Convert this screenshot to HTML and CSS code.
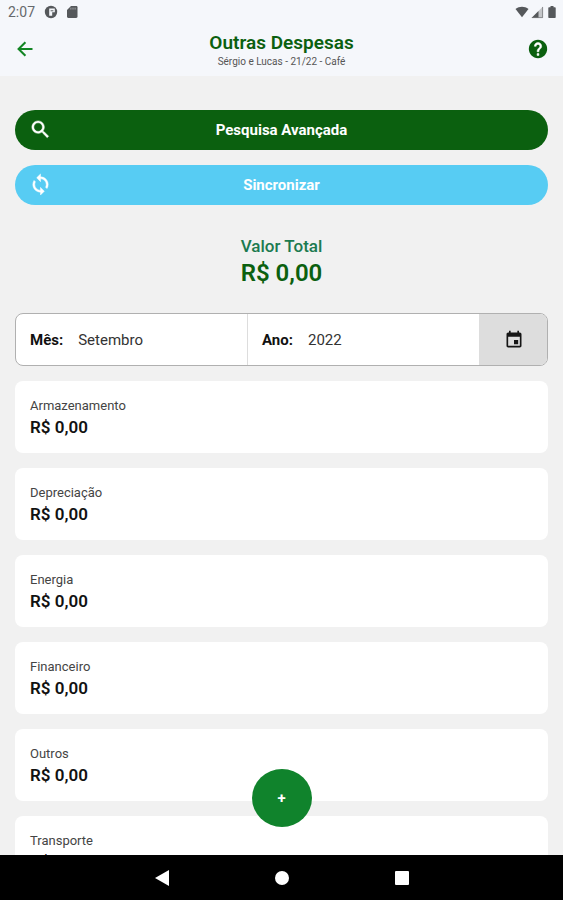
FILE: index.html
```html
<!DOCTYPE html>
<html lang="pt-BR">
<head>
<meta charset="utf-8">
<meta name="viewport" content="width=device-width, initial-scale=1">
<title>Outras Despesas</title>
<link rel="stylesheet" href="styles.css">
</head>
<body>
<div class="screen">
  <header class="header">
    <div class="status">
      <span class="clock">2:07</span>
      <svg class="status-icon" viewBox="0 0 14 14"><circle cx="7" cy="7" r="6.200" fill="#55585b"/><path fill="#f5f7fb" d="M5.200 3.600h5.600v3.600H8.200v3.600H5.200z"/><path fill="#85888b" d="M6.600 5h2.800v1.400H6.600z"/></svg>
      <svg class="status-icon sd" viewBox="0 0 14 14"><path fill="#55585b" d="M6 1h5.2c.7 0 1.3.5 1.3 1.200v9.600c0 .7-.6 1.200-1.300 1.200H3.300c-.7 0-1.300-.5-1.300-1.200V5z"/><path stroke="#a9abae" stroke-width=".9" d="M5.900 2.600v2M8 2.600v2M10.100 2.600v2"/></svg>
      <span class="spacer"></span>
      <svg class="status-icon" viewBox="0 0 14 14"><path fill="#55585b" d="M.5 4C4.300.900 9.700.900 13.500 4L7 12.200z"/></svg>
      <svg class="status-icon" viewBox="0 0 14 14"><path fill="#c4c6c9" d="M13 1.500V13H1.500z"/><path fill="#55585b" d="M8.500 6v7h-7z"/><path fill="none" stroke="#77797c" stroke-width=".8" d="M12.600 2v10.600H2"/></svg>
      <svg class="status-icon" viewBox="0 0 14 14"><path fill="#55585b" d="M5.500 1h3v1.200H10c.4 0 .7.3.7.7v9.400c0 .4-.3.700-.7.700H4c-.4 0-.7-.3-.7-.7V2.900c0-.4.3-.7.7-.7h1.500z"/></svg>
    </div>
    <div class="appbar">
      <button class="icon-button" type="button" aria-label="Voltar">
        <svg class="back-icon" viewBox="0 0 24 24"><path fill="none" stroke="#138524" stroke-width="2.500" d="M21 12H4.500M12.500 3.800 4.300 12l8.200 8.200"/></svg>
      </button>
      <div class="titles">
        <h1 class="title">Outras Despesas</h1>
        <p class="subtitle">Sérgio e Lucas - 21/22 - Café</p>
      </div>
      <button class="icon-button" type="button" aria-label="Ajuda">
        <svg class="help-icon" viewBox="0 0 24 24"><path fill="#0b600f" stroke="none" d="M12 2C6.480 2 2 6.480 2 12s4.480 10 10 10 10-4.480 10-10S17.520 2 12 2z"/><path fill="#fff" stroke="#fff" stroke-width=".6" d="M13 19h-2v-2h2v2zm2.070-7.750-.9.920C13.450 12.900 13 13.500 13 15h-2v-.5c0-1.100.450-2.100 1.170-2.830l1.240-1.260c.370-.360.590-.860.590-1.410 0-1.100-.9-2-2-2s-2 .9-2 2H8c0-2.210 1.790-4 4-4s4 1.790 4 4c0 .880-.360 1.680-.930 2.250z"/></svg>
      </button>
    </div>
  </header>

  <main class="content">
    <div class="actions">
      <button class="action search" type="button">
        <svg class="action-icon" viewBox="0 0 24 24"><path fill="currentColor" stroke="currentColor" stroke-width=".5" d="M15.500 14h-.79l-.28-.27C15.410 12.590 16 11.110 16 9.500 16 5.910 13.090 3 9.500 3S3 5.910 3 9.500 5.910 16 9.500 16c1.610 0 3.090-.59 4.230-1.570l.27.28v.79l5 4.990L20.490 19l-4.990-5zm-6 0C7.010 14 5 11.990 5 9.500S7.010 5 9.500 5 14 7.010 14 9.500 11.990 14 9.500 14z"/></svg>
        <span>Pesquisa Avançada</span>
      </button>
      <button class="action sync" type="button">
        <svg class="action-icon" viewBox="0 0 24 24"><path fill="currentColor" stroke="currentColor" stroke-width=".5" d="M12 4V1L8 5l4 4V6c3.310 0 6 2.690 6 6 0 1.010-.25 1.970-.7 2.800l1.460 1.460C19.540 15.030 20 13.570 20 12c0-4.420-3.580-8-8-8zm0 14c-3.310 0-6-2.690-6-6 0-1.010.25-1.970.7-2.800L5.240 7.740C4.460 8.970 4 10.430 4 12c0 4.420 3.580 8 8 8v3l4-4-4-4v3z"/></svg>
        <span>Sincronizar</span>
      </button>
    </div>

    <section class="total">
      <h2 class="total-label">Valor Total</h2>
      <p class="total-value">R$ 0,00</p>
    </section>

    <div class="period">
      <div class="period-field"><span class="period-name">Mês:</span><span class="period-value">Setembro</span></div>
      <div class="period-field"><span class="period-name">Ano:</span><span class="period-value">2022</span></div>
      <button class="calendar" type="button" aria-label="Escolher período">
        <svg class="calendar-icon" viewBox="0 0 24 24"><path fill="#151515" d="M17 12h-5v5h5v-5zM16 1v2H8V1H6v2H5c-1.110 0-1.990.9-1.990 2L3 19c0 1.100.890 2 2 2h14c1.100 0 2-.9 2-2V5c0-1.100-.9-2-2-2h-1V1h-2zm3 18H5V8h14v11z"/></svg>
      </button>
    </div>

    <ul class="expenses">
      <li class="card"><span class="card-name">Armazenamento</span><strong class="card-value">R$ 0,00</strong></li>
      <li class="card"><span class="card-name">Depreciação</span><strong class="card-value">R$ 0,00</strong></li>
      <li class="card"><span class="card-name">Energia</span><strong class="card-value">R$ 0,00</strong></li>
      <li class="card"><span class="card-name">Financeiro</span><strong class="card-value">R$ 0,00</strong></li>
      <li class="card"><span class="card-name">Outros</span><strong class="card-value">R$ 0,00</strong></li>
      <li class="card"><span class="card-name">Transporte</span><strong class="card-value">R$ 0,00</strong></li>
    </ul>
  </main>

  <footer class="footer">
    <button class="add" type="button" aria-label="Adicionar despesa">+</button>
    <nav class="navbar" aria-label="Sistema">
      <button class="nav-button" type="button" aria-label="Voltar"><svg class="nav-icon" viewBox="0 0 16 16"><path fill="#fff" d="M15 0v16L1 8z"/></svg></button>
      <button class="nav-button" type="button" aria-label="Início"><svg class="nav-icon" viewBox="0 0 16 16"><circle cx="8" cy="8" r="7" fill="#fff"/></svg></button>
      <button class="nav-button" type="button" aria-label="Recentes"><svg class="nav-icon" viewBox="0 0 16 16"><rect x="1" y="1" width="14" height="14" rx="1" fill="#fff"/></svg></button>
    </nav>
  </footer>
</div>
</body>
</html>
```
FILE: styles.css
```css
* {
  box-sizing: border-box;
}

body {
  margin: 0;
  background: #f1f1f1;
  color: #111;
  font-family: Roboto, "Liberation Sans", sans-serif;
  font-size: 15px;
}

h1, h2, p, ul {
  margin: 0;
  padding: 0;
}

button {
  border: 0;
  padding: 0;
  font: inherit;
  cursor: pointer;
}

svg {
  display: block;
}

.screen {
  display: flex;
  flex-direction: column;
  height: 100vh;
}

.header {
  background: #f5f7fb;
  padding-bottom: 2px;
}

.status {
  display: flex;
  align-items: center;
  gap: 1px;
  height: 24px;
  padding: 0 4px 0 8px;
  color: #66696c;
}

.clock {
  margin-right: 8px;
  font-size: 14px;
}

.status-icon {
  width: 14px;
  height: 14px;
}

.sd {
  margin-left: 6px;
}

.spacer {
  flex: 1;
}

.appbar {
  display: flex;
  align-items: center;
  justify-content: space-between;
  height: 50px;
  padding: 0 14px;
}

.icon-button {
  display: grid;
  place-items: center;
  width: 22px;
  height: 40px;
  background: none;
}

.back-icon {
  width: 20px;
  height: 20px;
}

.help-icon {
  width: 22px;
  height: 22px;
}

.titles {
  padding-top: 1px;
  text-align: center;
}

.title {
  color: #0b600f;
  font-size: 19px;
  font-weight: 600;
  line-height: 24px;
}

.subtitle {
  color: #555;
  font-size: 10px;
  line-height: 14px;
}

.content {
  flex: 1;
  min-height: 0;
  overflow: hidden;
  padding: 34px 15px 0;
}

.actions {
  display: grid;
  gap: 15px;
}

.action {
  position: relative;
  height: 40px;
  border-radius: 20px;
  color: #fff;
  font-weight: 700;
}

.search {
  background: #0b600f;
}

.sync {
  background: #57ccf3;
}

.action-icon {
  position: absolute;
  top: 8px;
  left: 14px;
  width: 23px;
  height: 23px;
}

.total {
  padding: 29px 0 24px;
  text-align: center;
}

.total-label {
  color: #1c7a50;
  font-size: 17px;
  font-weight: 500;
  line-height: 24px;
}

.total-value {
  color: #0b600f;
  font-size: 24px;
  font-weight: 600;
  line-height: 31px;
}

.period {
  display: flex;
  height: 53px;
  margin-bottom: 15px;
  overflow: hidden;
  border: 1px solid #b0b0b0;
  border-radius: 8px;
  background: #fff;
}

.period-field {
  display: flex;
  flex: 1;
  align-items: center;
  gap: 15px;
  padding-left: 14px;
  border-right: 1px solid #ddd;
}

.period-name {
  font-weight: 700;
}

.period-value {
  color: #333;
}

.calendar {
  display: grid;
  place-items: center;
  width: 67px;
  background: #ddd;
}

.calendar-icon {
  width: 20px;
  height: 20px;
}

.expenses {
  display: grid;
  gap: 15px;
  list-style: none;
}

.card {
  display: flex;
  flex-direction: column;
  height: 72px;
  padding: 15px;
  border-radius: 8px;
  background: #fff;
}

.card-name {
  color: #444;
  font-size: 13px;
  line-height: 20px;
}

.card-value {
  font-size: 17px;
  font-weight: 600;
  line-height: 22px;
}

.footer {
  position: relative;
}

.add {
  position: absolute;
  bottom: 73px;
  left: calc(50% - 30px);
  width: 60px;
  height: 58px;
  border-radius: 50%;
  background: #10832c;
  color: #fff;
  font-weight: 700;
}

.navbar {
  display: flex;
  align-items: center;
  justify-content: center;
  gap: 104px;
  height: 45px;
  background: #000;
}

.nav-button {
  background: none;
}

.nav-icon {
  width: 16px;
  height: 16px;
}
```
